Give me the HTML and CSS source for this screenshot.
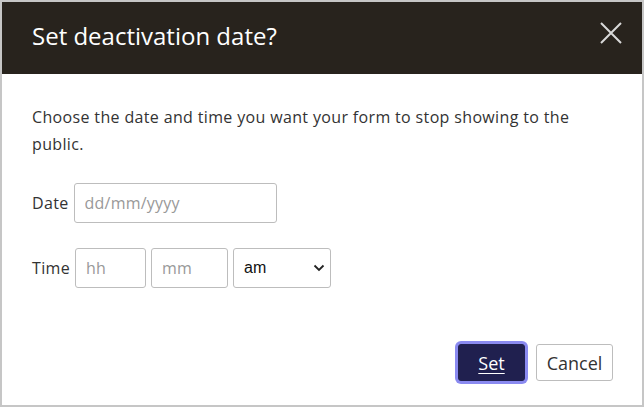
FILE: index.html
```html
<!DOCTYPE html>
<html lang="en">
<head>
<meta charset="utf-8">
<title>Set deactivation date?</title>
<link rel="stylesheet" href="styles.css">
</head>
<body>
<div class="dialog">
  <header class="dialog-header">
    <h1 class="dialog-title">Set deactivation date?</h1>
    <button class="close" aria-label="Close">
      <svg width="22" height="22" viewBox="0 0 22 22"><path d="M1 1 L21 21 M21 1 L1 21" stroke="#d9d9d9" stroke-width="2" fill="none"/></svg>
    </button>
  </header>
  <div class="dialog-body">
    <p class="intro">Choose the date and time you want your form to stop showing to the public.</p>
    <div class="row date-row">
      <label class="lbl">Date</label>
      <input class="field date" type="text" placeholder="dd/mm/yyyy">
    </div>
    <div class="row time-row">
      <label class="lbl">Time</label>
      <input class="field hh" type="text" placeholder="hh">
      <input class="field mm" type="text" placeholder="mm">
      <div class="select">
        <span>am</span>
        <svg width="12" height="8" viewBox="0 0 12 8"><path d="M1.5 1.5 L6 6 L10.5 1.5" stroke="#222" stroke-width="1.8" fill="none"/></svg>
      </div>
    </div>
  </div>
  <footer class="dialog-footer">
    <button class="btn primary">Set</button>
    <button class="btn secondary">Cancel</button>
  </footer>
</div>
</body>
</html>
```
FILE: styles.css
```css
html, body {
  margin: 0;
  padding: 0;
  background: #fff;
}
.dialog {
  box-sizing: border-box;
  width: 644px;
  height: 407px;
  border: 2px solid #c6c6c6;
  display: flex;
  flex-direction: column;
  font-family: "Open Sans", sans-serif;
  color: #333;
}
.dialog-header {
  height: 72px;
  background: #28231d;
  display: flex;
  align-items: center;
  justify-content: space-between;
  padding: 0 20px 4px 30px;
  box-sizing: border-box;
}
.dialog-title {
  margin: 0;
  font-family: "Open Sans", sans-serif;
  font-weight: 400;
  font-size: 24px;
  line-height: 30px;
  color: #fff;
}
.close {
  align-self: flex-start;
  background: none;
  border: 0;
  padding: 0;
  width: 22px;
  height: 22px;
  margin-top: 20px;
}
.close svg { display: block; }
.dialog-body {
  padding: 30px 30px 0 30px;
}
.intro {
  margin: 0;
  font-size: 16px;
  line-height: 27px;
  letter-spacing: 0.35px;
}
.row {
  display: flex;
  align-items: center;
}
.date-row { margin-top: 25px; }
.time-row { margin-top: 25px; }
.lbl {
  font-size: 16px;
  color: #333;
  letter-spacing: 0.35px;
  margin-right: 5px;
}
.field {
  box-sizing: border-box;
  height: 40px;
  border: 1px solid #bdbdbd;
  border-radius: 3px;
  padding: 0 10px;
  font-family: "Open Sans", sans-serif;
  font-size: 16px;
  letter-spacing: 0.2px;
  color: #333;
  margin: 0;
}
.field::placeholder { color: #999; }
.date { width: 203px; }
.hh { width: 71px; }
.mm { width: 77px; margin-left: 5px; }
.select {
  box-sizing: border-box;
  width: 98px;
  height: 40px;
  margin-left: 5px;
  border: 1px solid #bdbdbd;
  border-radius: 3px;
  display: flex;
  align-items: center;
  justify-content: space-between;
  padding: 0 5px 0 10px;
  font-family: "Liberation Sans", sans-serif;
  font-size: 16px;
  color: #111;
}
.dialog-footer {
  margin-top: auto;
  display: flex;
  justify-content: flex-end;
  gap: 11px;
  padding: 0 29px 24px 0;
}
.btn {
  box-sizing: border-box;
  height: 37px;
  border-radius: 3px;
  font-family: "Open Sans", sans-serif;
  font-size: 18px;
  padding: 0 8px;
}
.primary {
  background: #20204f;
  color: #fff;
  border: 1px solid #20204f;
  width: 67px;
  text-decoration: underline;
  text-underline-offset: 3px;
  box-shadow: 0 0 0 3px #8a8af0;
}
.secondary {
  background: #fff;
  color: #333;
  border: 1px solid #bdbdbd;
  width: 77px;
}
```
